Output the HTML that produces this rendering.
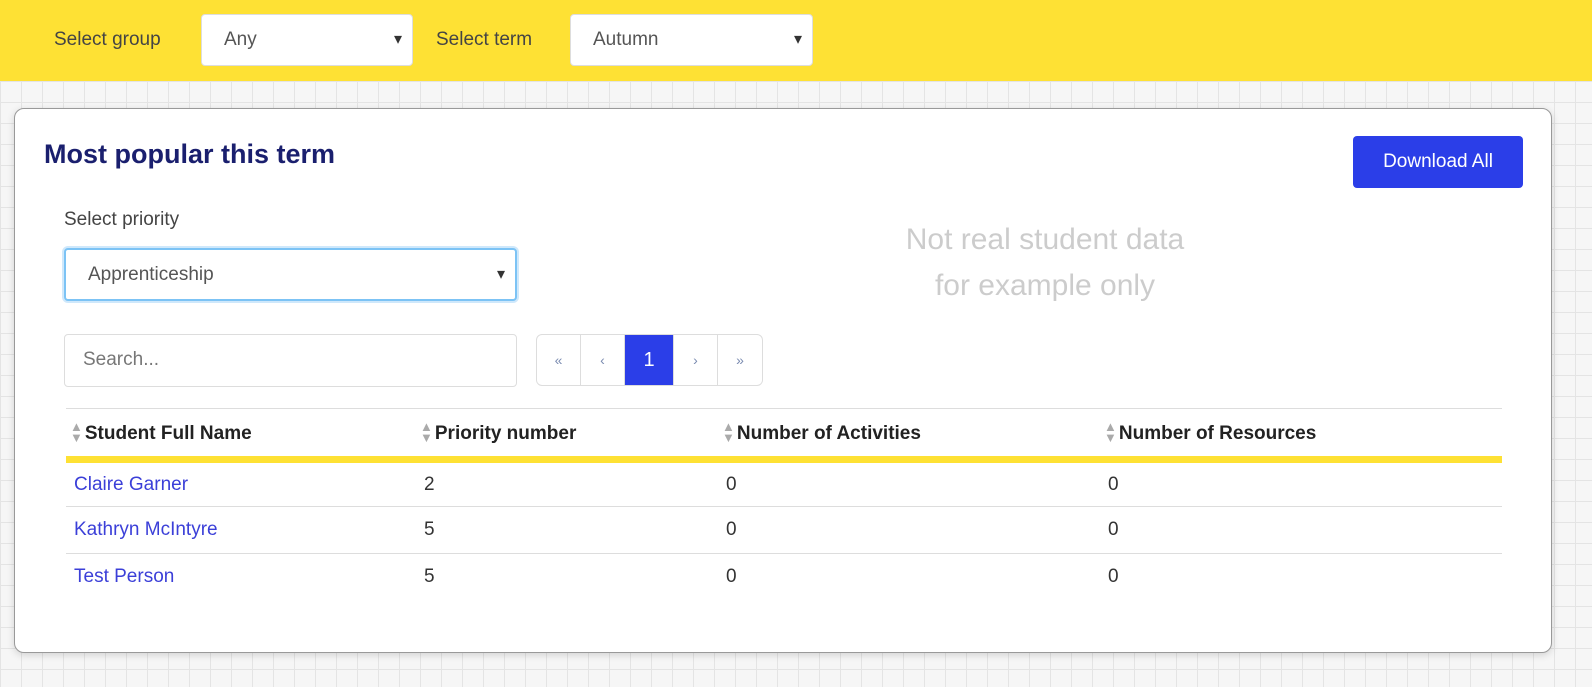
<!DOCTYPE html>
<html><head><style>
*{box-sizing:border-box}
body{margin:0;width:1592px;height:687px;overflow:hidden;font-family:"Liberation Sans",sans-serif;color:#333;
background-color:#f6f6f6;background-image:linear-gradient(#e4e4e4 1px,transparent 1px),linear-gradient(90deg,#e4e4e4 1px,transparent 1px);background-size:21px 21px;background-position:0 81px}
.top{position:absolute;left:0;top:0;width:1592px;height:81px;background:#fee134}
.lbl{position:absolute;font-size:19px;color:#444;top:29px}
.sel{position:absolute;background:#fff;border:1px solid #ddd;border-radius:4px;font-size:19px;color:#555;padding-left:22px;line-height:50px}
.dd:after{content:"▾";position:absolute;right:10px;top:0;font-size:16px;color:#333}
.card{position:absolute;left:14px;top:108px;width:1538px;height:545px;background:#fff;border:1px solid #999;border-radius:10px;box-shadow:0 2px 8px rgba(0,0,0,.15)}
h2{position:absolute;left:29px;top:30px;margin:0;font-size:27px;color:#1a1f6e;font-weight:bold}
.btn{position:absolute;left:1338px;top:27px;width:170px;height:52px;background:#2b3ee8;color:#fff;border-radius:4px;font-size:19px;text-align:center;line-height:52px}
.wm{position:absolute;left:830px;top:108px;width:400px;text-align:center;color:#ccc;font-size:30px;line-height:46px}
table{position:absolute;left:51px;top:299px;width:1436px;border-collapse:collapse;font-size:19px}
th{text-align:left;height:51px;border-top:1px solid #ddd;border-bottom:7px solid #fee134;font-weight:bold;color:#222;padding-top:3px}
td{height:47px;border-bottom:1px solid #ddd;padding-left:8px}
td a{color:#3b3fd8}
.ar{display:inline-block;color:#aaa;font-size:13px;line-height:11px;vertical-align:middle;margin:-3px 2px 0 3px}
.pg{position:absolute;top:225px;height:52px;border:1px solid #ddd;border-radius:6px;display:flex;left:521px;overflow:hidden}
.pg div{width:44px;border-right:1px solid #ddd;text-align:center;line-height:50px;color:#7a8bb0;font-size:14px}
.pg div:last-child{border:none}
</style></head><body>
<div class="top">
<div class="lbl" style="left:54px">Select group</div>
<div class="sel dd" style="left:201px;top:14px;width:212px;height:52px">Any</div>
<div class="lbl" style="left:436px">Select term</div>
<div class="sel dd" style="left:570px;top:14px;width:243px;height:52px">Autumn</div>
</div>
<div class="card">
<h2>Most popular this term</h2>
<div class="btn">Download All</div>
<div style="position:absolute;left:49px;top:100px;font-size:19px;color:#444">Select priority</div>
<div class="sel dd" style="left:49px;top:139px;width:453px;height:53px;border:2px solid #7cc3f5;box-shadow:0 0 0 2px #cfe8fb;line-height:49px">Apprenticeship</div>
<div class="wm">Not real student data<br>for example only</div>
<div class="sel" style="left:49px;top:225px;width:453px;height:53px;color:#777;padding-left:18px">Search...</div>
<div class="pg"><div>«</div><div>‹</div><div style="width:49px;background:#2b3ee8;color:#fff;font-size:20px">1</div><div>›</div><div>»</div></div>
<table>
<tr><th style="width:350px"><span class="ar">▲<br>▼</span>Student Full Name</th><th style="width:302px"><span class="ar">▲<br>▼</span>Priority number</th><th style="width:382px"><span class="ar">▲<br>▼</span>Number of Activities</th><th><span class="ar">▲<br>▼</span>Number of Resources</th></tr>
<tr><td><a>Claire Garner</a></td><td>2</td><td>0</td><td>0</td></tr>
<tr><td><a>Kathryn McIntyre</a></td><td>5</td><td>0</td><td>0</td></tr>
<tr><td style="border:none"><a>Test Person</a></td><td style="border:none">5</td><td style="border:none">0</td><td style="border:none">0</td></tr>
</table>
</div>
</body></html>
